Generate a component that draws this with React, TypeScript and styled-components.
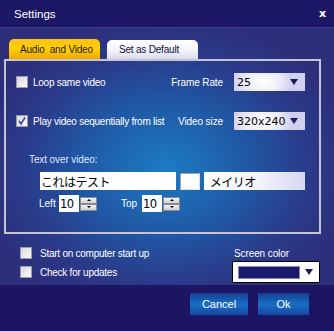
import styled, { createGlobalStyle } from 'styled-components';

const Global = createGlobalStyle`
  html, body { margin: 0; padding: 0; background: #1c1563; }
  body { font-family: "Liberation Sans", Arial, sans-serif; }
`;

const Window = styled.div`
  width: 334px; height: 331px; display: flex; flex-direction: column;
  background: #1c1563; overflow: hidden; font-family: "Liberation Sans", Arial, sans-serif;
`;
const TitleBar = styled.div`
  height: 27px; flex-shrink: 0; display: flex; align-items: center; justify-content: space-between;
  padding: 0 8px 0 14px; background: #1d1865; border-bottom: 1px solid #3a3a8a;
  color: #fff; font-size: 11.5px;
`;
const Close = styled.span`font-weight: 700; font-size: 11px; font-family: "DejaVu Sans", sans-serif;`;
const Body = styled.div`
  height: 257px; flex-shrink: 0; padding: 11px 0 0 4px; box-sizing: border-box;
  background: radial-gradient(ellipse 190px 150px at 165px 140px, #1c7cc2 0%, #2057a4 45%, #2a3b8a 75%, #2d2f7b 100%);
  display: flex; flex-direction: column;
`;
const Tabs = styled.div`display: flex; gap: 7px; padding-left: 5px; align-items: flex-end; height: 20px;`;
const Tab = styled.div<{ active?: boolean }>`
  width: 91px; height: ${p => (p.active ? 20 : 19)}px; box-sizing: border-box;
  border-radius: 5px 5px 0 0; font-size: 10px; letter-spacing: -0.2px; display: flex; align-items: center;
  padding-left: ${p => (p.active ? 11 : 12)}px; color: ${p => (p.active ? '#1a1a10' : '#10103a')};
  background: ${p => (p.active
    ? 'linear-gradient(#ffc21a, #ffd000 50%, #f2a800)'
    : 'linear-gradient(#ffffff, #f2f2fa 60%, #d8d8ee)')};
  white-space: pre;
`;
const Panel = styled.div`
  width: 317px; height: 175px; box-sizing: border-box; border: 2px solid #c4c4d4;
  padding: 12px 14px 0 10px; display: flex; flex-direction: column;
`;
const Row = styled.div<{ mt?: number }>`
  display: flex; align-items: center; justify-content: space-between; height: 18px;
  margin-top: ${p => p.mt ?? 0}px;
`;
const Check = styled.label`
  display: flex; align-items: center; gap: 5px; color: #fff; font-size: 10px; letter-spacing: -0.25px;
`;
const Box = styled.span`
  width: 12px; height: 12px; box-sizing: border-box; border: 1px solid #9a9aa8;
  background: linear-gradient(135deg, #d8d8dc, #fafafa); display: inline-flex;
  align-items: center; justify-content: center; flex-shrink: 0;
`;
const Field = styled.div`display: flex; align-items: center; gap: 11px; color: #fff; font-size: 10px; letter-spacing: -0.1px;`;
const Select = styled.div<{ w: number }>`
  width: ${p => p.w}px; height: 18px; box-sizing: border-box; display: flex; align-items: center;
  justify-content: space-between; padding: 0 7px 0 3px; color: #000; font-size: 11px; letter-spacing: 0;
  font-family: "DejaVu Sans", sans-serif;
  background: radial-gradient(ellipse 30px 20px at 40% 50%, #ffffff, #ececf8 60%, #cfcfee 100%);
`;
const Arrow = styled.span`
  width: 0; height: 0; border-left: 4px solid transparent; border-right: 4px solid transparent;
  border-top: 6px solid #1c1a5e;
`;
const Caption = styled.div`color: #dfe6ff; font-size: 10px; letter-spacing: -0.1px; margin: 24px 0 0 13px;`;
const InputRow = styled.div`display: flex; align-items: center; gap: 4px; margin: 7px 0 0 24px;`;
const TextBox = styled.div<{ w: number }>`
  width: ${p => p.w}px; height: 18px; background: #fff; color: #000; font-size: 12px;
  display: flex; align-items: center; padding-left: 1px; box-sizing: border-box;
  font-family: "Noto Sans CJK JP", sans-serif; letter-spacing: -0.5px;
`;
const Swatch = styled.div`
  width: 20px; height: 17px; box-sizing: border-box; background: #fff;
  border: 1px solid #a0a0b0; border-right-color: #e0e0e0; border-bottom-color: #e0e0e0;
`;
const FontSel = styled.div`
  width: 104px; height: 18px; box-sizing: border-box; padding-left: 6px; display: flex; align-items: center;
  font-size: 12px; color: #000; font-family: "Noto Sans CJK JP", sans-serif; letter-spacing: -0.5px;
  background: linear-gradient(90deg, #ffffff, #f4f4fc 55%, #d6d6f0);
`;
const PosRow = styled.div`display: flex; align-items: center; margin: 5px 0 0 23px; gap: 24px;`;
const Pos = styled.div`display: flex; align-items: center; color: #fff; font-size: 10px;`;
const PosLabel = styled.span<{ w: number }>`width: ${p => p.w}px;`;
const Num = styled.div`
  width: 20px; height: 17px; background: #fff; color: #000; font-size: 11.5px;
  font-family: "DejaVu Sans", sans-serif; display: flex; align-items: center; padding-left: 1px;
  box-sizing: border-box; letter-spacing: -0.5px;
`;
const Spin = styled.div`display: flex; flex-direction: column; margin-left: 1px;`;
const SpinBtn = styled.div<{ up?: boolean }>`
  width: 17px; height: 7px; box-sizing: border-box; border: 1px solid #8a8a96;
  background: linear-gradient(#f4f4f4, #d0d0d4); display: flex; align-items: center; justify-content: center;
  &::after {
    content: ''; width: 0; height: 0; border-left: 2px solid transparent; border-right: 2px solid transparent;
    ${p => (p.up ? 'border-bottom: 2px solid #000;' : 'border-top: 2px solid #000;')}
  }
`;
const Bottom = styled.div`display: flex; justify-content: space-between; padding: 13px 14px 0 16px;`;
const Options = styled.div`display: flex; flex-direction: column; gap: 7px;`;
const BigCheck = styled(Check)`gap: 8px;`;
const ColorPick = styled.div`
  display: flex; flex-direction: column; color: #fff; font-size: 10px; padding: 1px 0 0 2px; letter-spacing: -0.1px;
`;
const ColorSel = styled.div`
  margin: 2px 0 0 -2px; width: 88px; height: 22px; box-sizing: border-box; border: 1px solid #000;
  background: #fff; display: flex; align-items: center; padding: 0 6px 0 5px; gap: 5px;
`;
const ColorFill = styled.div`flex: 1; height: 11px; background: #1a1a6e; border: 1px solid #8888b8;`;
const Footer = styled.div`
  flex: 1; display: flex; justify-content: flex-end; align-items: flex-start; gap: 10px;
  padding: 8px 25px 0 0; background: #1c1563;
`;
const Button = styled.button<{ w: number }>`
  width: ${p => p.w}px; height: 22px; border: none; padding: 0; color: #fff; font-size: 11px;
  font-family: "Liberation Sans", Arial, sans-serif;
  background: linear-gradient(#1a3c8c, #1462b8 35%, #1a6cc4 55%, #1248a0 100%);
`;

const Tick = () => (
  <svg width="10" height="10" viewBox="0 0 10 10">
    <path d="M2 5 L4 8 L8 1.5" stroke="#3050b0" strokeWidth="1.6" fill="none" />
  </svg>
);

export default function App() {
  return (
    <>
      <Global />
      <Window>
        <TitleBar>
          <span>Settings</span>
          <Close>x</Close>
        </TitleBar>
        <Body>
          <Tabs>
            <Tab active>Audio  and Video</Tab>
            <Tab>Set as Default</Tab>
          </Tabs>
          <Panel>
            <Row>
              <Check><Box />Loop same video</Check>
              <Field>Frame Rate<Select w={71}>25<Arrow /></Select></Field>
            </Row>
            <Row mt={21}>
              <Check><Box><Tick /></Box>Play video sequentially from list</Check>
              <Field>Video size<Select w={71}>320x240<Arrow /></Select></Field>
            </Row>
            <Caption>Text over video:</Caption>
            <InputRow>
              <TextBox w={140}>これはテスト</TextBox>
              <Swatch />
              <FontSel>メイリオ</FontSel>
            </InputRow>
            <PosRow>
              <Pos>
                <PosLabel w={20}>Left</PosLabel>
                <Num>10</Num>
                <Spin><SpinBtn up /><SpinBtn /></Spin>
              </Pos>
              <Pos>
                <PosLabel w={21}>Top</PosLabel>
                <Num>10</Num>
                <Spin><SpinBtn up /><SpinBtn /></Spin>
              </Pos>
            </PosRow>
          </Panel>
          <Bottom>
            <Options>
              <BigCheck><Box />Start on computer start up</BigCheck>
              <BigCheck><Box />Check for updates</BigCheck>
            </Options>
            <ColorPick>
              Screen color
              <ColorSel><ColorFill /><Arrow /></ColorSel>
            </ColorPick>
          </Bottom>
        </Body>
        <Footer>
          <Button w={58}>Cancel</Button>
          <Button w={51}>Ok</Button>
        </Footer>
      </Window>
    </>
  );
}
